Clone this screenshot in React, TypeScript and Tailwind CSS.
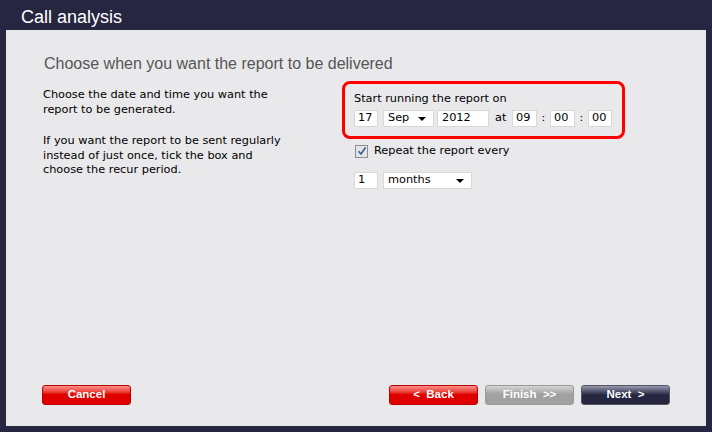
/**
 * Call analysis wizard — "choose when the report is delivered" step.
 * Static layout only: values are hard-coded as in the screenshot.
 */

const verdana = { fontFamily: '"DejaVu Sans", Verdana, sans-serif' };

function TextBox({ value, className }: { value: string; className: string }) {
    return (
        <div
            className={`flex h-[17px] items-center border border-[#d8d8d8] bg-white pl-[3px] text-[11.3px] text-black ${className}`}
        >
            {value}
        </div>
    );
}

function SelectBox({ value, className }: { value: string; className: string }) {
    return (
        <div
            className={`flex h-[17px] items-center justify-between border border-[#d8d8d8] bg-white pl-[4px] pr-[7px] text-[11.3px] text-black ${className}`}
        >
            <span>{value}</span>
            {/* little black caret */}
            <span className="h-0 w-0 border-x-[4px] border-t-[4px] border-x-transparent border-t-black" />
        </div>
    );
}

function WizardButton({ label, tone }: { label: string; tone: "red" | "grey" | "navy" }) {
    const tones = {
        red: "border-[#b80000] bg-linear-to-b from-[#ff8a8a] via-[#e00000] via-45% to-[#e00000]",
        grey: "border-[#9a9a9a] bg-linear-to-b from-[#d6d6d6] via-[#a1a1a1] via-45% to-[#a1a1a1]",
        navy: "border-[#555566] bg-linear-to-b from-[#9a9ab0] via-[#262641] via-50% to-[#262641]",
    };
    return (
        <button
            className={`flex h-[20px] w-[89px] items-center justify-center whitespace-pre rounded-[3px] border text-[11.5px] font-bold text-white ${tones[tone]}`}
            style={{ fontFamily: '"Liberation Sans", Arial, sans-serif' }}
        >
            {label}
        </button>
    );
}

export default function App() {
    return (
        <div className="flex h-[432px] w-[712px] flex-col bg-[#262641]">
            {/* ===== Title bar ===== */}
            <div
                className="h-[30px] pl-[21px] pt-[6px] text-[18px] leading-[22px] text-white"
                style={{ fontFamily: '"Liberation Sans", Arial, sans-serif' }}
            >
                Call analysis
            </div>

            {/* ===== Panel ===== */}
            <div className="mx-[6px] mb-[6px] flex flex-1 flex-col bg-[#e9e9eb]">
                <h1
                    className="mt-[24px] pl-[38px] text-[16px] leading-[20px] text-[#555555]"
                    style={{ fontFamily: '"Liberation Sans", Arial, sans-serif' }}
                >
                    Choose when you want the report to be delivered
                </h1>

                <div className="mt-[7px] flex" style={verdana}>
                    {/* left: explanation */}
                    <div className="w-[336px] pl-[37px] pt-[7px] text-[11.3px] leading-[14.5px] text-black">
                        <p>
                            Choose the date and time you want the
                            <br />
                            report to be generated.
                        </p>
                        <p className="mt-[17px]">
                            If you want the report to be sent regularly
                            <br />
                            instead of just once, tick the box and
                            <br />
                            choose the recur period.
                        </p>
                    </div>

                    {/* right: form */}
                    <div className="flex flex-col">
                        <div className="h-[58px] w-[283px] rounded-[8px] border-[3px] border-[#ff0000] pl-[9px] pt-[8px]">
                            <div className="text-[11.3px] leading-[14px] text-black">Start running the report on</div>
                            <div className="mt-[4px] flex items-center text-[11.3px] text-black">
                                <TextBox value="17" className="w-[24px]" />
                                <SelectBox value="Sep" className="ml-[5px] w-[51px]" />
                                <TextBox value="2012" className="ml-[3px] w-[52px] pl-[4px]" />
                                <span className="ml-[6px] w-[17px]">at</span>
                                <TextBox value="09" className="w-[25px]" />
                                <span className="w-[13px] text-center">:</span>
                                <TextBox value="00" className="w-[25px]" />
                                <span className="w-[13px] text-center">:</span>
                                <TextBox value="00" className="w-[24px]" />
                            </div>
                        </div>

                        <div className="mt-[5px] flex items-center pl-[13px] text-[11.3px] text-black">
                            <span className="flex h-[13px] w-[13px] items-center justify-center border border-[#8e8f8f] bg-[#e4e4e4]">
                                <svg viewBox="0 0 10 10" className="h-[10px] w-[10px]">
                                    <path d="M1.5 5.2 L4 8 L8.5 1.5" fill="none" stroke="#3f5aa0" strokeWidth="1.6" />
                                </svg>
                            </span>
                            <span className="ml-[6px] leading-[14px]">Repeat the report every</span>
                        </div>

                        <div className="mt-[14px] flex items-center pl-[12px]">
                            <TextBox value="1" className="w-[24px]" />
                            <SelectBox value="months" className="ml-[5px] w-[89px]" />
                        </div>
                    </div>
                </div>

                {/* ===== Footer buttons ===== */}
                <div className="mt-auto flex items-center justify-between px-[36px] pb-[21px]">
                    <WizardButton label="Cancel" tone="red" />
                    <div className="flex gap-[7px]">
                        <WizardButton label="<  Back" tone="red" />
                        <WizardButton label="Finish  >>" tone="grey" />
                        <WizardButton label="Next  >" tone="navy" />
                    </div>
                </div>
            </div>
        </div>
    );
}
